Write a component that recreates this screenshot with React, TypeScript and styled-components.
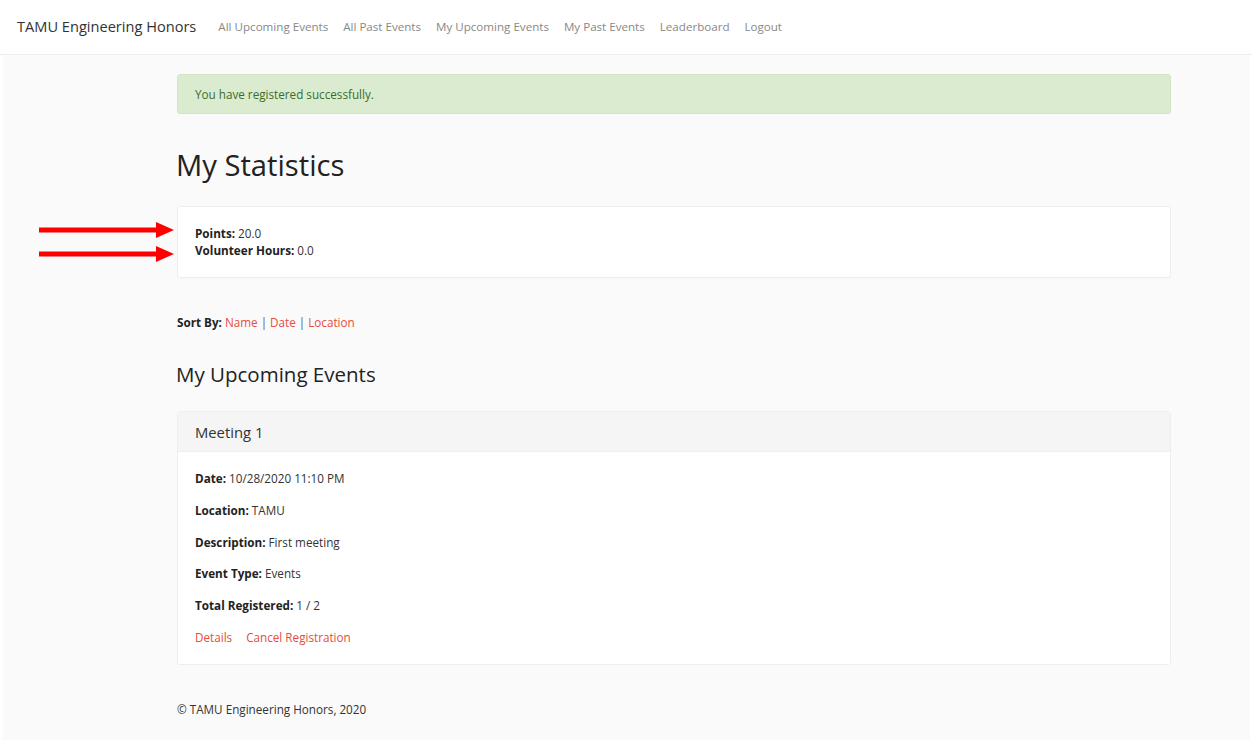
import React from "react";
import styled, { createGlobalStyle } from "styled-components";

const Global = createGlobalStyle`
  html, body { margin: 0; padding: 0; background: #ffffff; }
  body {
    font-family: "Open Sans", "Liberation Sans", sans-serif;
    font-size: 11.7px;
    color: #333333;
  }
  * { box-sizing: border-box; }
`;

const Frame = styled.div`
  position: relative;
  margin: 0 2px 0 3px;
  min-height: 740px;
  background: #fafafa;
`;

const Navbar = styled.nav`
  height: 55px;
  background: #ffffff;
  border-bottom: 1px solid #eeeeee;
  display: flex;
  align-items: center;
  margin: 0 -2px 0 -3px;
  padding-left: 17px;
`;

const Brand = styled.a`
  font-size: 14.6px;
  color: #333333;
  text-decoration: none;
  margin-right: 22px;
  margin-top: -2px;
`;

const NavLinks = styled.div`
  display: flex;
  gap: 15px;
  margin-top: -2px;
`;

const NavLink = styled.a`
  font-size: 11.6px;
  color: #888888;
  text-decoration: none;
`;

const Container = styled.main`
  width: 994px;
  margin-left: 174px;
  padding-top: 19px;
`;

const Alert = styled.div`
  height: 40px;
  background: #dbebd0;
  border: 1px solid #d3e5c6;
  border-radius: 3px;
  color: #3c6b2c;
  display: flex;
  align-items: center;
  padding-left: 17px;
`;

const PageTitle = styled.h1`
  font-size: 29.2px;
  font-weight: 400;
  color: #222222;
  margin: 30px 0 0 -1px;
  line-height: 42px;
`;

const Card = styled.div`
  background: #ffffff;
  border: 1px solid #eeeeee;
  border-radius: 3px;
  margin-top: 20px;
  padding: 18px 17px;
  box-shadow: 0 1px 1px rgba(0,0,0,0.02);
`;

const Line = styled.div`
  line-height: 17px;
`;

const Label = styled.b`
  font-weight: 700;
  color: #222222;
`;

const SortRow = styled.div`
  margin-top: 36px;
  line-height: 17px;
`;

const RedLink = styled.a`
  color: #e74c3c;
  text-decoration: none;
`;

const Sep = styled.span`
  color: #555555;
  margin: 0 3px;
`;

const SubTitle = styled.h2`
  font-size: 20.5px;
  font-weight: 400;
  color: #222222;
  margin: 28px 0 0 -1px;
  line-height: 30px;
`;

const Panel = styled.div`
  background: #ffffff;
  border: 1px solid #eeeeee;
  border-radius: 3px;
  margin-top: 22px;
`;

const PanelHeader = styled.div`
  height: 40px;
  background: #f5f5f5;
  border-bottom: 1px solid #eeeeee;
  display: flex;
  align-items: center;
  padding-left: 17px;
  font-size: 14.8px;
  color: #333333;
`;

const PanelBody = styled.div`
  padding: 18px 17px 18px;
  display: flex;
  flex-direction: column;
  gap: 14.8px;
`;

const Actions = styled.div`
  display: flex;
  gap: 14px;
  line-height: 17px;
`;

const Footer = styled.footer`
  margin-top: 36px;
  line-height: 17px;
  color: #333333;
`;

const Arrow = styled.svg<{ $top: number }>`
  position: absolute;
  left: 36px;
  top: ${(p) => p.$top}px;
`;

const RedArrow = ({ top }: { top: number }) => (
  <Arrow $top={top} width="136" height="18" viewBox="0 0 136 18">
    <rect x="0" y="6.5" width="118" height="5" fill="#ff0000" />
    <polygon points="117,1 135,9 117,17" fill="#ff0000" />
  </Arrow>
);

export default function App() {
  return (
    <>
      <Global />
      <Frame>
        <Navbar>
          <Brand href="#">TAMU Engineering Honors</Brand>
          <NavLinks>
            <NavLink href="#">All Upcoming Events</NavLink>
            <NavLink href="#">All Past Events</NavLink>
            <NavLink href="#">My Upcoming Events</NavLink>
            <NavLink href="#">My Past Events</NavLink>
            <NavLink href="#">Leaderboard</NavLink>
            <NavLink href="#">Logout</NavLink>
          </NavLinks>
        </Navbar>
        <Container>
          <Alert>You have registered successfully.</Alert>
          <PageTitle>My Statistics</PageTitle>
          <Card>
            <Line><Label>Points:</Label> 20.0</Line>
            <Line><Label>Volunteer Hours:</Label> 0.0</Line>
          </Card>
          <SortRow>
            <Label>Sort By:</Label> <RedLink href="#">Name</RedLink>
            <Sep>|</Sep>
            <RedLink href="#">Date</RedLink>
            <Sep>|</Sep>
            <RedLink href="#">Location</RedLink>
          </SortRow>
          <SubTitle>My Upcoming Events</SubTitle>
          <Panel>
            <PanelHeader>Meeting 1</PanelHeader>
            <PanelBody>
              <Line><Label>Date:</Label> 10/28/2020 11:10 PM</Line>
              <Line><Label>Location:</Label> TAMU</Line>
              <Line><Label>Description:</Label> First meeting</Line>
              <Line><Label>Event Type:</Label> Events</Line>
              <Line><Label>Total Registered:</Label> 1 / 2</Line>
              <Actions>
                <RedLink href="#">Details</RedLink>
                <RedLink href="#">Cancel Registration</RedLink>
              </Actions>
            </PanelBody>
          </Panel>
          <Footer>© TAMU Engineering Honors, 2020</Footer>
        </Container>
        <RedArrow top={221} />
        <RedArrow top={245} />
      </Frame>
    </>
  );
}
